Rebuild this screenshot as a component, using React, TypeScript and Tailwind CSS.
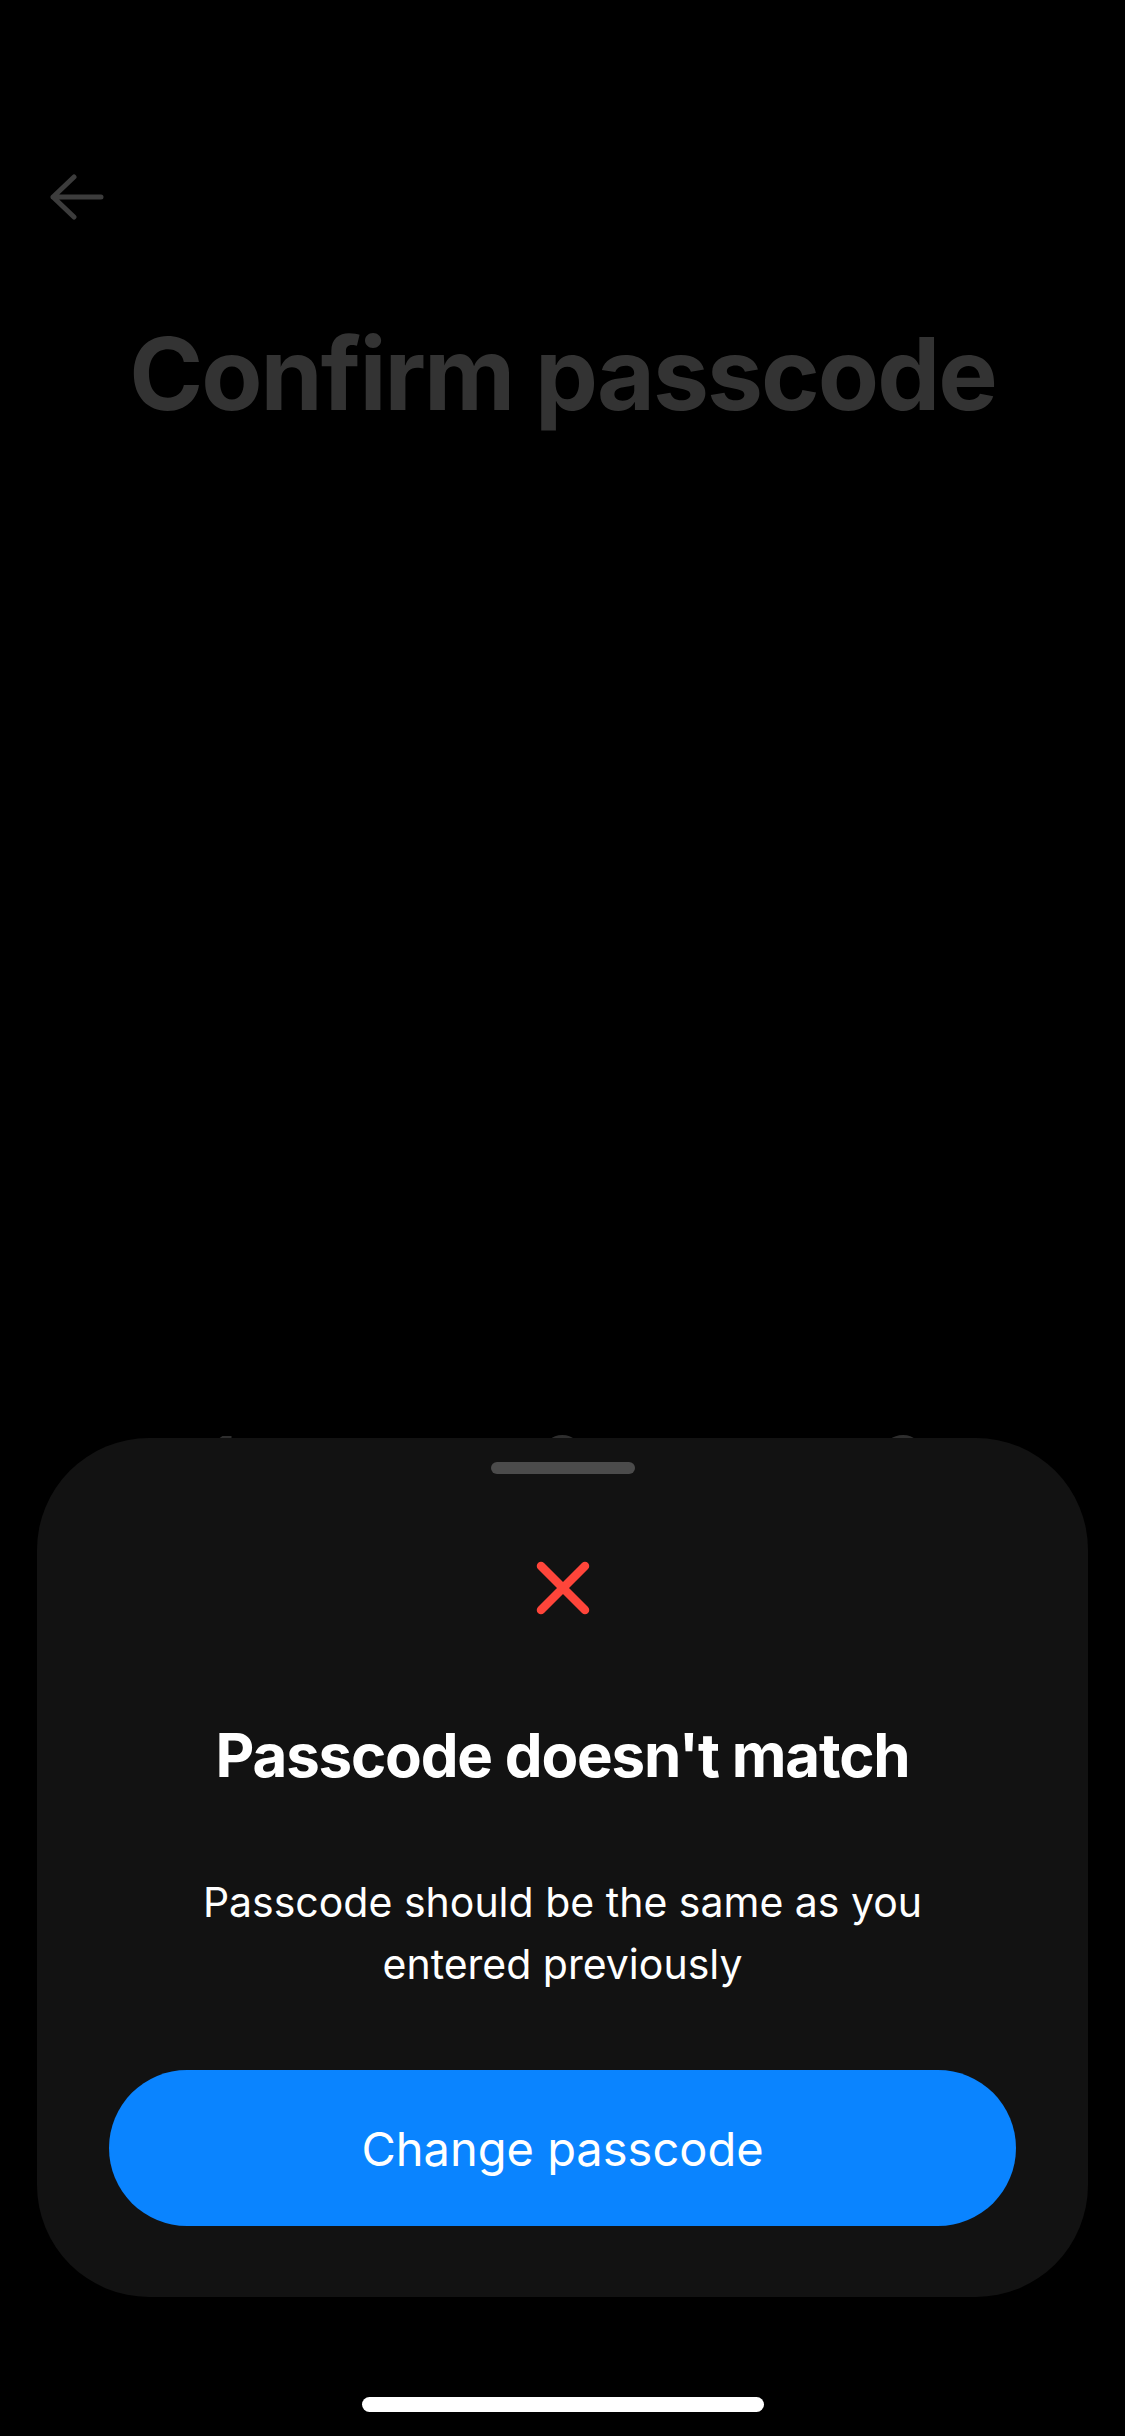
import React from 'react';

function BackArrow() {
  return (
    <svg width="56" height="46" viewBox="0 0 56 46" fill="none">
      <path d="M53 23H5M26 3L5 23l21 20" stroke="#3c3c3c" strokeWidth="5" strokeLinecap="round" strokeLinejoin="round" />
    </svg>
  );
}

function ErrorCross() {
  return (
    <svg width="58" height="58" viewBox="0 0 58 58" fill="none">
      <path d="M7 7l44 44M51 7L7 51" stroke="#ff453a" strokeWidth="8.5" strokeLinecap="round" />
    </svg>
  );
}

export default function App() {
  return (
    <div className="relative w-[1125px] h-[2436px] overflow-hidden bg-black font-['Inter','Noto_Sans',sans-serif]">
      {/* dimmed screen behind the sheet */}
      <div className="flex flex-col">
        <div className="pt-[174px] pl-[48px]">
          <BackArrow />
        </div>
        <h1 className="mt-[94px] text-center text-[100px] leading-[120px] font-bold tracking-[-2px] text-[#333333]">
          Confirm passcode
        </h1>
        <div className="mt-[991px] grid grid-cols-3 px-[52px] text-center text-[80px] leading-[80px] text-[#2e2e2e]">
          <span>1</span>
          <span>2</span>
          <span>3</span>
        </div>
      </div>

      {/* bottom sheet */}
      <div className="absolute left-[37px] right-[37px] top-[1438px] h-[859px] rounded-[112px] bg-[#121212] flex flex-col items-center">
        <div className="mt-[24px] w-[144px] h-[12px] rounded-full bg-[#4b4b4b]" />
        <div className="mt-[85px]">
          <ErrorCross />
        </div>
        <h2 className="mt-[102px] text-[60px] leading-[72px] font-bold tracking-[-1.2px] text-white">
          Passcode doesn't match
        </h2>
        <p className="mt-[80px] text-center text-[41px] leading-[62px] text-white">
          Passcode should be the same as you
          <br />
          entered previously
        </p>
        <button className="mt-[75px] w-[907px] h-[156px] rounded-[78px] bg-[#0a84ff] text-white text-[47px] leading-none">
          Change passcode
        </button>
      </div>

      {/* home indicator */}
      <div className="absolute left-[362px] top-[2397px] w-[402px] h-[15px] rounded-full bg-white" />
    </div>
  );
}
